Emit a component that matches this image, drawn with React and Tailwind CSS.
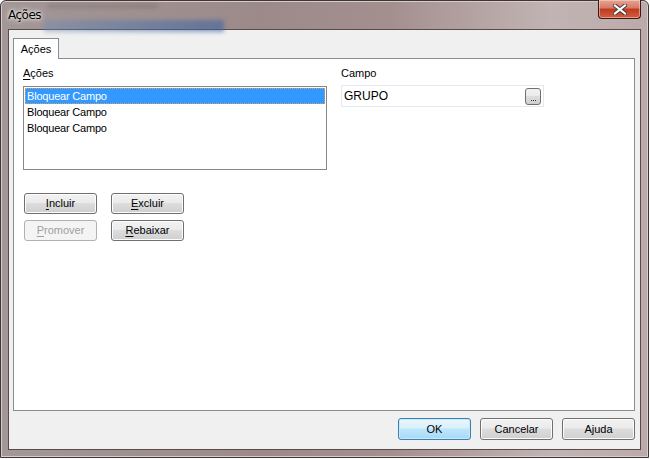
import React from 'react';

const Btn = ({ children, disabled, primary, className = '' }) => (
  <button
    className={`h-[21px] w-[73px] rounded-[3px] border text-[11px] leading-none ${
      disabled
        ? 'border-[#adb2b5] bg-[#f4f4f4] text-[#a0a0a0]'
        : primary
        ? 'border-[#3c7fb1] bg-[linear-gradient(#eaf6fd_0%,#d9f0fc_45%,#bee6fd_50%,#a7d9f5_100%)] text-black shadow-[inset_0_0_0_1px_#c9e8f8]'
        : 'border-[#707070] bg-[linear-gradient(#f2f2f2_0%,#ebebeb_45%,#dddddd_50%,#cfcfcf_100%)] text-black shadow-[inset_0_0_0_1px_#fcfcfc]'
    } ${className}`}
  >
    {children}
  </button>
);

const U = ({ children }) => <span className="underline underline-offset-[2px]">{children}</span>;

export default function App() {
  return (
    <div className="w-[650px] h-[459px] bg-white font-['Liberation_Sans',Arial,sans-serif]">
      <div className="w-[649px] h-[458px] flex flex-col rounded-t-[6px] border border-[#3f3535] bg-[linear-gradient(90deg,#a39797_0%,#9c8a8a_40%,#a48f8f_60%,#c2b4b4_85%,#bcaaaa_100%)] shadow-[inset_0_0_0_1px_#d8cccc]">
        {/* Title bar */}
        <div className="h-[28px] flex items-start justify-between pl-[7px] pr-[7px]">
          <div className="relative h-full flex items-center">
            <div className="absolute left-[36px] top-[19px] w-[180px] h-[12px] bg-[linear-gradient(90deg,rgba(110,140,180,0.45),rgba(60,100,160,0.6))] blur-[2px]" />
            <div className="absolute left-[40px] top-[3px] w-[110px] h-[4px] bg-[rgba(90,80,80,0.25)] blur-[2px]" />
            <span className="relative text-[12px] text-black font-['DejaVu_Sans',sans-serif] tracking-[-0.5px] [text-shadow:0_0_6px_#ffffff,0_0_3px_#ffffff]">Ações</span>
          </div>
          <div className="w-[43px] h-[19px] -mt-px rounded-b-[4px] border border-[#3a1a14] border-t-0 bg-[linear-gradient(#e8a493_0%,#d37a64_45%,#c1391f_50%,#cf5f3f_100%)] flex items-center justify-center shadow-[inset_0_0_0_1px_rgba(255,220,210,0.5)]">
            <svg width="14" height="11" viewBox="0 0 14 11">
              <path d="M2 1.5 L12 9.5 M12 1.5 L2 9.5" stroke="#3a3a3a" strokeWidth="4" strokeLinecap="square" />
              <path d="M2 1.5 L12 9.5 M12 1.5 L2 9.5" stroke="#ffffff" strokeWidth="2.2" strokeLinecap="square" />
            </svg>
          </div>
        </div>

        {/* Client area */}
        <div className="ml-[7px] mr-[7px] h-[421px] border border-[#5a4a4a] bg-[#f0f0f0] flex flex-col pl-[4px] pr-[5px] pt-[8px]">
          {/* Tab header */}
          <div className="flex">
            <div className="relative z-10 -mb-px h-[21px] w-[46px] border border-[#898c95] border-b-0 bg-white flex items-center justify-center text-[11px] text-black">
              Ações
            </div>
          </div>
          {/* Tab panel */}
          <div className="h-[353px] border border-[#898c95] bg-white flex pl-[9px] pt-[8px]">
            <div className="w-[304px] flex flex-col">
              <div className="text-[11px] leading-[13px] text-black"><U>A</U>ções</div>
              <div className="mt-[6px] h-[84px] border border-[#828790] bg-white p-px flex flex-col">
                <div className="h-[16px] bg-[#3399ff] text-white text-[11px] tracking-[-0.2px] leading-[16px] pl-[2px] outline-dotted outline-1 outline-[#d8a060] -outline-offset-1">Bloquear Campo</div>
                <div className="h-[16px] text-[11px] tracking-[-0.2px] leading-[16px] pl-[2px] text-black">Bloquear Campo</div>
                <div className="h-[16px] text-[11px] tracking-[-0.2px] leading-[16px] pl-[2px] text-black">Bloquear Campo</div>
              </div>
              <div className="mt-[23px] grid grid-cols-[73px_73px] gap-x-[14px] gap-y-[6px] pl-px">
                <Btn><U>I</U>ncluir</Btn>
                <Btn><U>E</U>xcluir</Btn>
                <Btn disabled><U>P</U>romover</Btn>
                <Btn><U>R</U>ebaixar</Btn>
              </div>
            </div>
            <div className="ml-[14px] flex flex-col">
              <div className="text-[11px] leading-[13px] text-black">Campo</div>
              <div className="mt-[5px] h-[22px] w-[203px] border border-[#e3e9ef] bg-white flex items-center justify-between pl-[2px] pr-[2px]">
                <span className="text-[12px] text-black">GRUPO</span>
                <div className="h-[17px] w-[16px] rounded-[3px] border border-[#707070] bg-[linear-gradient(#f2f2f2_0%,#ebebeb_45%,#dddddd_50%,#cfcfcf_100%)] flex items-end justify-center pb-[3px] gap-px">
                  <span className="w-px h-px bg-[#333]" />
                  <span className="w-px h-px bg-[#333]" />
                  <span className="w-px h-px bg-[#333]" />
                </div>
              </div>
            </div>
          </div>
          {/* Dialog buttons */}
          <div className="mt-[7px] flex justify-end gap-[9px]">
            <Btn primary className="h-[22px]">OK</Btn>
            <Btn className="h-[22px]">Cancelar</Btn>
            <Btn className="h-[22px]">Ajuda</Btn>
          </div>
        </div>
      </div>
    </div>
  );
}
